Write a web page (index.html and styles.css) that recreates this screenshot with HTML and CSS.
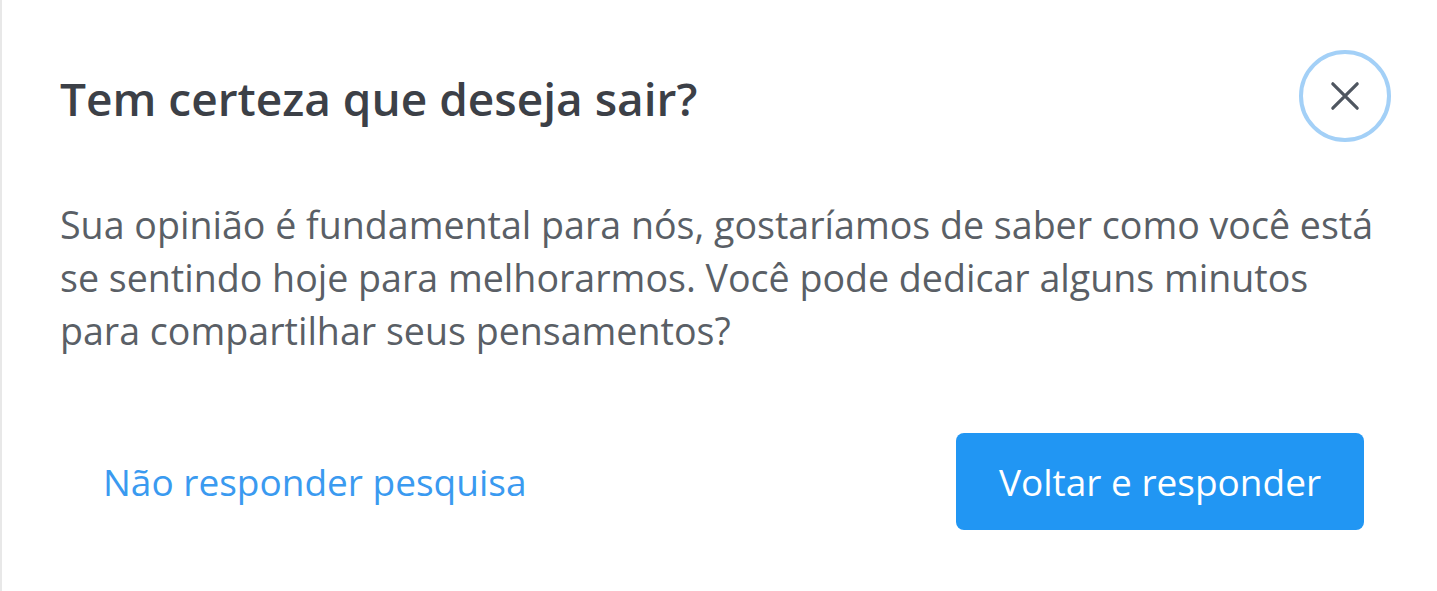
FILE: index.html
```html
<!DOCTYPE html>
<html lang="pt-BR">
<head>
<meta charset="utf-8">
<title>Tem certeza que deseja sair?</title>
<link rel="stylesheet" href="styles.css">
</head>
<body>
<div class="dialog">
  <div class="dialog-header">
    <h2 class="dialog-title">Tem certeza que deseja sair?</h2>
    <button class="close-btn" aria-label="Fechar">
      <svg viewBox="0 0 32 32" width="30" height="30" aria-hidden="true">
        <path d="M3 3 L29 29 M29 3 L3 29" stroke="#4f5660" stroke-width="3.4" stroke-linecap="round" fill="none"/>
      </svg>
    </button>
  </div>
  <p class="dialog-text">Sua opinião é fundamental para nós, gostaríamos de saber como você está se sentindo hoje para melhorarmos. Você pode dedicar alguns minutos para compartilhar seus pensamentos?</p>
  <div class="dialog-actions">
    <button class="link-btn">Não responder pesquisa</button>
    <button class="primary-btn">Voltar e responder</button>
  </div>
</div>
</body>
</html>
```

FILE: styles.css
```css
html, body {
  margin: 0;
  padding: 0;
  background: #ffffff;
}
body {
  font-family: "Open Sans", "Noto Sans", sans-serif;
  color: #555a60;
}
.dialog {
  box-sizing: border-box;
  height: 591px;
  border-left: 2px solid #e8e8e8;
  padding: 50px 46px 0 58px;
}
.dialog-header {
  display: flex;
  justify-content: space-between;
  align-items: center;
}
.dialog-title {
  margin: 0;
  font-size: 46px;
  font-weight: 600;
  color: #3c4047;
  line-height: 1.2;
  position: relative;
  top: 3px;
}
.close-btn {
  box-sizing: border-box;
  width: 92px;
  height: 92px;
  border-radius: 50%;
  border: 4px solid #a3d0f7;
  background: #fff;
  display: flex;
  align-items: center;
  justify-content: center;
  padding: 0;
  cursor: pointer;
}
.dialog-text {
  margin: 56px 0 0 0;
  font-size: 37.6px;
  line-height: 53px;
  color: #5a5f66;
  max-width: 1326px;
}
.dialog-actions {
  display: flex;
  justify-content: space-between;
  align-items: center;
  margin-top: 76px;
  padding-right: 27px;
}
.link-btn {
  font-family: inherit;
  font-size: 37px;
  color: #3a9af0;
  background: none;
  border: none;
  padding: 0 0 0 43px;
  cursor: pointer;
}
.primary-btn {
  font-family: inherit;
  font-size: 37px;
  color: #ffffff;
  background: #2196f3;
  border: none;
  border-radius: 8px;
  width: 408px;
  height: 97px;
  cursor: pointer;
}
```
